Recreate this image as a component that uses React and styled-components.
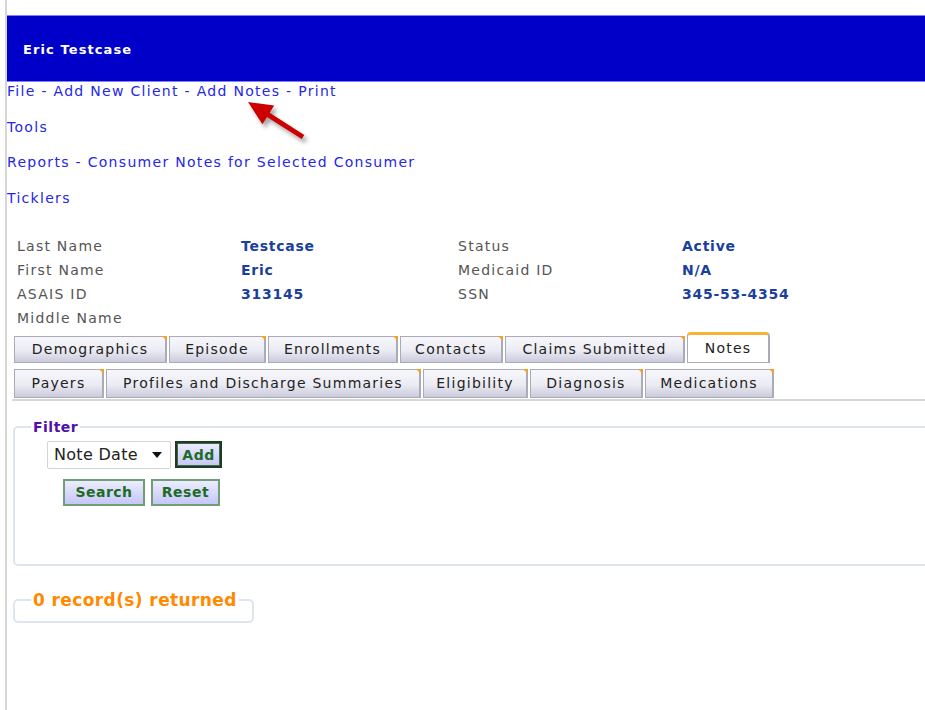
import styled, { createGlobalStyle } from "styled-components";

const GlobalStyle = createGlobalStyle({
  body: {
    margin: 0,
    background: "#fff",
    fontFamily: '"DejaVu Sans", Verdana, sans-serif',
  },
});

const Root = styled.div({
  position: "relative",
  width: "925px",
  height: "710px",
  overflow: "hidden",
});

const Page = styled.div({
  marginLeft: "5px",
  borderLeft: "2px solid #d6d6d6",
  minHeight: "710px",
  paddingTop: "15px",
  boxSizing: "border-box",
  letterSpacing: "1.25px",
});

const TitleBar = styled.header({
  height: "63px",
  background: "#0000c8",
  borderTop: "1px solid #8080ff",
  borderBottom: "1px solid #8080ff",
  display: "flex",
  alignItems: "center",
  padding: "2px 0 0 16px",
  color: "#fff",
  fontWeight: "bold",
  fontSize: "13px",
  letterSpacing: "1.1px",
});

const MenuList = styled.nav({
  display: "flex",
  flexDirection: "column",
  gap: "17.5px",
});

const MenuRow = styled.div({
  fontSize: "14px",
  lineHeight: "18px",
  color: "#2626e8",
  letterSpacing: "1.3px",
});

const MenuLink = styled.a({
  color: "#2626e8",
  textDecoration: "none",
});

const InfoGrid = styled.div({
  display: "grid",
  gridTemplateColumns: "224px 217px 224px auto",
  gridAutoRows: "24px",
  alignItems: "center",
  padding: "27px 0 0 10px",
  fontSize: "14px",
});

const Label = styled.span({
  color: "#555",
});

const Value = styled.span({
  color: "#1b3f9c",
  fontWeight: "bold",
  letterSpacing: "0.75px",
});

const TabArea = styled.div({
  margin: "2px 0 0 5px",
  padding: "0 0 1px 2px",
  borderBottom: "2px solid #d8d8d8",
});

const TabRow = styled.div({
  display: "flex",
  alignItems: "flex-end",
  gap: "2px",
  marginBottom: "6px",
  "&:last-child": { marginBottom: 0 },
});

const Tab = styled.div(({ $active, $w, $h }) => ({
  position: "relative",
  width: $w,
  height: $h,
  boxSizing: "border-box",
  display: "flex",
  alignItems: "center",
  justifyContent: "center",
  fontSize: "14px",
  color: "#222",
  border: "1px solid #a9abb8",
  borderRightWidth: "2px",
  borderTop: $active ? "3px solid #f7b23a" : "1px solid #a9abb8",
  borderRadius: $active ? "4px 4px 0 0" : 0,
  background: $active
    ? "#fff"
    : "linear-gradient(#f7f7fb, #ebebf3 55%, #cacadc)",
  "&::after": $active
    ? {}
    : {
        content: '""',
        position: "absolute",
        top: "-1px",
        right: "-2px",
        borderTop: "5px solid #f5a02a",
        borderLeft: "5px solid transparent",
      },
}));

const Fieldset = styled.fieldset(({ $w, $h }) => ({
  margin: "0 0 0 6px",
  width: $w,
  height: $h,
  boxSizing: "border-box",
  border: "2px solid #dde5ee",
  borderRadius: "5px",
  padding: "0 0 0 32px",
}));

const Legend = styled.legend(({ $color, $size, $spacing }) => ({
  color: $color,
  fontWeight: "bold",
  fontSize: $size,
  letterSpacing: $spacing,
  padding: "0 2px",
  marginLeft: "-16px",
}));

const FilterLine = styled.div({
  display: "flex",
  alignItems: "center",
  gap: "4px",
  marginTop: "6px",
});

const Select = styled.div({
  width: "124px",
  height: "28px",
  boxSizing: "border-box",
  border: "1px solid #d4d4d4",
  borderRadius: "2px",
  display: "flex",
  alignItems: "center",
  justifyContent: "space-between",
  padding: "0 8px 0 6px",
  fontSize: "16px",
  letterSpacing: "0.3px",
  color: "#222",
  background: "#fff",
});

const Caret = styled.span({
  width: 0,
  height: 0,
  borderLeft: "5px solid transparent",
  borderRight: "5px solid transparent",
  borderTop: "6px solid #111",
});

const Button = styled.button(({ $strong, $w }) => ({
  width: $w,
  height: "27px",
  boxSizing: "border-box",
  border: $strong ? "2px solid #1e3a22" : "2px solid #6f9f74",
  boxShadow: $strong ? "inset 0 0 0 1px #3d6b43" : "none",
  background: "linear-gradient(#ececff, #c6c6f8)",
  color: "#1d6b27",
  fontWeight: "bold",
  fontSize: "14px",
  letterSpacing: "0.5px",
  fontFamily: "inherit",
  padding: 0,
}));

const ButtonLine = styled.div({
  display: "flex",
  gap: "6px",
  marginTop: "10px",
  marginLeft: "16px",
});

const Spacer = styled.div(({ $h }) => ({ height: $h }));

const Arrow = styled.svg({
  position: "absolute",
  left: "240px",
  top: "95px",
  overflow: "visible",
  filter: "drop-shadow(3px 4px 2px rgba(0,0,0,0.35))",
});

const menu = [
  ["File", "Add New Client", "Add Notes", "Print"],
  ["Tools"],
  ["Reports", "Consumer Notes for Selected Consumer"],
  ["Ticklers"],
];

const info = [
  ["Last Name", "Testcase", "Status", "Active"],
  ["First Name", "Eric", "Medicaid ID", "N/A"],
  ["ASAIS ID", "313145", "SSN", "345-53-4354"],
  ["Middle Name", "", "", ""],
];

const tabsTop = [
  ["Demographics", 153],
  ["Episode", 97],
  ["Enrollments", 130],
  ["Contacts", 103],
  ["Claims Submitted", 180],
  ["Notes", 83, true],
];

const tabsBottom = [
  ["Payers", 90],
  ["Profiles and Discharge Summaries", 315],
  ["Eligibility", 105],
  ["Diagnosis", 113],
  ["Medications", 129],
];

export default function App() {
  return (
    <Root>
      <GlobalStyle />
      <Page>
        <TitleBar>Eric Testcase</TitleBar>
        <MenuList>
          {menu.map((items, i) => (
            <MenuRow key={i}>
              {items.map((item, j) => (
                <span key={item}>
                  {j > 0 && " - "}
                  <MenuLink href="#">{item}</MenuLink>
                </span>
              ))}
            </MenuRow>
          ))}
        </MenuList>

        <InfoGrid>
          {info.map((row) => [
            <Label key={row[0]}>{row[0]}</Label>,
            <Value key={row[0] + "v"}>{row[1]}</Value>,
            <Label key={row[0] + "l2"}>{row[2]}</Label>,
            <Value key={row[0] + "v2"}>{row[3]}</Value>,
          ])}
        </InfoGrid>

        <TabArea>
          <TabRow>
            {tabsTop.map(([name, w, active]) => (
              <Tab key={name} $w={`${w}px`} $h={active ? "31px" : "27px"} $active={active}>
                {name}
              </Tab>
            ))}
          </TabRow>
          <TabRow>
            {tabsBottom.map(([name, w]) => (
              <Tab key={name} $w={`${w}px`} $h="29px">
                {name}
              </Tab>
            ))}
          </TabRow>
        </TabArea>

        <Spacer $h="18px" />
        <Fieldset $w="930px" $h="147px">
          <Legend $color="#5010a8" $size="14px" $spacing="0.5px">Filter</Legend>
          <FilterLine>
            <Select>
              Note Date
              <Caret />
            </Select>
            <Button $strong $w="47px">Add</Button>
          </FilterLine>
          <ButtonLine>
            <Button $w="82px">Search</Button>
            <Button $w="69px">Reset</Button>
          </ButtonLine>
        </Fieldset>

        <Spacer $h="24px" />
        <Fieldset $w="241px" $h="33px">
          <Legend $color="#ff8a00" $size="17px" $spacing="0.4px">0 record(s) returned</Legend>
        </Fieldset>
      </Page>

      <Arrow width="75" height="55" viewBox="240 95 75 55">
        <polygon
          fill="#cc0000"
          points="248,102 274.2,105.6 269.6,112.8 304.3,134.9 301.7,139.1 267,117 262.4,124.2"
        />
      </Arrow>
    </Root>
  );
}
